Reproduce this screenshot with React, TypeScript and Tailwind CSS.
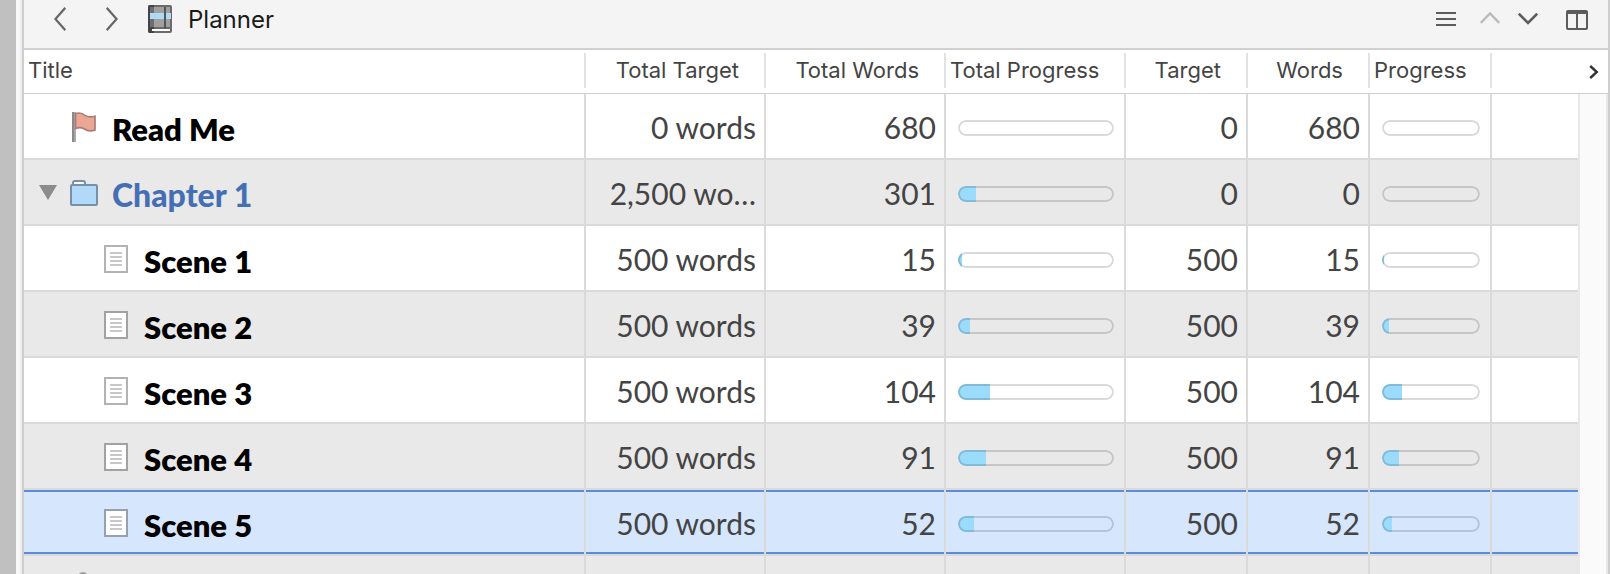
import React, { useState } from 'react';
import clsx from 'clsx';

type IconKind = 'flag' | 'folder' | 'doc' | 'character';

interface PlannerItem {
  id: string;
  title: string;
  icon: IconKind;
  depth: number;
  totalTarget: string;
  totalWords: string;
  totalProgress: number;
  target: string;
  words: string;
  progress: number;
}

const scene = (n: number, words: number): PlannerItem => ({
  id: `scene-${n}`,
  title: `Scene ${n}`,
  icon: 'doc',
  depth: 1,
  totalTarget: '500 words',
  totalWords: String(words),
  totalProgress: words / 500,
  target: '500',
  words: String(words),
  progress: words / 500,
});

const items: PlannerItem[] = [
  {
    id: 'read-me',
    title: 'Read Me',
    icon: 'flag',
    depth: 0,
    totalTarget: '0 words',
    totalWords: '680',
    totalProgress: 0,
    target: '0',
    words: '680',
    progress: 0,
  },
  {
    id: 'chapter-1',
    title: 'Chapter 1',
    icon: 'folder',
    depth: 0,
    totalTarget: '2,500 wo…',
    totalWords: '301',
    totalProgress: 301 / 2500,
    target: '0',
    words: '0',
    progress: 0,
  },
  scene(1, 15),
  scene(2, 39),
  scene(3, 104),
  scene(4, 91),
  scene(5, 52),
];

function BookIcon() {
  return (
    <svg width="24" height="28" viewBox="0 0 24 28" aria-hidden="true">
      <rect x="0" y="0" width="24" height="28" rx="2" fill="#6a6a6a" />
      <path d="M2 0H6V28H2Q0 28 0 26V2Q0 0 2 0Z" fill="#444444" />
      <rect x="2" y="2" width="4" height="20" fill="#6e6e6e" />
      <rect x="6" y="2" width="16" height="20" fill="#a0a0a0" />
      <rect x="2" y="8" width="21" height="6" fill="#aedaf8" />
      <rect x="16" y="2" width="2" height="24" fill="#555555" />
      <rect x="4" y="24" width="18" height="2" fill="#ffffff" />
    </svg>
  );
}

function ItemIcon({ kind }: { kind: IconKind }) {
  if (kind === 'flag') {
    return (
      <svg width="24" height="30" viewBox="0 0 24 30" aria-hidden="true">
        <rect x="0" y="0" width="4" height="30" fill="#a9a9a9" />
        <rect x="0" y="0" width="2" height="30" fill="#8a8a8a" />
        <path
          d="M3.5 1.5C8 .2 10.5 1.2 13 3.4C16 5.4 19 5.2 23 4.2V18C18 19.8 15 18.8 12 16.8C9.5 15.2 7 15 3.5 16.6Z"
          fill="#eaa794"
          stroke="#a97d7a"
          strokeWidth="1.7"
        />
      </svg>
    );
  }
  if (kind === 'folder') {
    return (
      <svg width="28" height="26" viewBox="0 0 28 26" aria-hidden="true">
        <path d="M3 5V3Q3 1 5 1H13Q15 1 15 3V5" fill="#ffffff" stroke="#7690a8" strokeWidth="2" />
        <rect x="1" y="5" width="26" height="20" rx="1" fill="#b2daf8" stroke="#7690a8" strokeWidth="2" />
      </svg>
    );
  }
  if (kind === 'doc') {
    return (
      <svg width="24" height="28" viewBox="0 0 24 28" aria-hidden="true">
        <rect x="2" y="2" width="20" height="24" fill="#ffffff" />
        <rect x="1" y="1" width="22" height="26" fill="none" stroke="#000000" strokeOpacity="0.3" strokeWidth="2" />
        <path d="M6 8H18M6 12H18M6 16H18M6 20H18" stroke="#c8c8c8" strokeWidth="2" />
      </svg>
    );
  }
  return (
    <svg width="24" height="32" viewBox="0 0 24 32" aria-hidden="true">
      <circle cx="13" cy="5" r="4" fill="#c4c4c4" stroke="#a2a2a2" strokeWidth="2" />
      <path d="M5 31V18Q5 11 13 11T21 18V31Z" fill="#c4c4c4" stroke="#a2a2a2" strokeWidth="2" />
    </svg>
  );
}

function ProgressBar({ value, label }: { value: number; label: string }) {
  return (
    <div
      role="progressbar"
      aria-label={label}
      aria-valuenow={Math.round(value * 100)}
      className="relative mt-1 h-4 w-full overflow-hidden rounded-full"
    >
      {/* snap to whole pixels so the edge of the fill stays crisp */}
      <div className="h-full bg-[#9bdcfc]" style={{ width: `round(down, ${value * 100}%, 1px)` }} />
      <div className="absolute inset-0 rounded-full border-2 border-black/15" />
    </div>
  );
}

interface CellProps {
  selected?: boolean;
  last?: boolean;
  className?: string;
  children?: React.ReactNode;
}

function Cell({ selected, last, className, children }: CellProps) {
  return (
    <td className={clsx('border-b-2 border-[#dadada] p-0', !last && 'border-r-2')}>
      <div
        className={clsx(
          'flex h-16 items-center',
          selected && 'border-y-2 border-[#5b8cdb] bg-[#d6e6fd]',
          className
        )}
      >
        {children}
      </div>
    </td>
  );
}

function HeaderCell({ children, align = 'left' }: { children: React.ReactNode; align?: 'left' | 'right' }) {
  return (
    <th scope="col" className="border-b border-[#d0d0d0] p-0 font-normal">
      <div
        className={clsx(
          'mb-[5px] mt-[3px] flex h-[35px] items-center whitespace-nowrap border-r-2 border-[#e2e2e2]',
          align === 'right' ? 'justify-end pr-[25px]' : 'pl-1'
        )}
      >
        {children}
      </div>
    </th>
  );
}

function Toolbar() {
  return (
    <header className="flex h-[50px] items-center border-b-2 border-[#d0d0d0] bg-[#f4f4f4] pb-[10px] pl-[30px] pr-5">
      <button type="button" aria-label="Back">
        <svg width="12" height="24" viewBox="0 0 12 24" fill="none" stroke="#666666" strokeWidth="2.2">
          <path d="M11.3 .8L1.4 12L11.3 23.2" />
        </svg>
      </button>
      <button type="button" aria-label="Forward" className="ml-10">
        <svg width="12" height="24" viewBox="0 0 12 24" fill="none" stroke="#666666" strokeWidth="2.2">
          <path d="M.7 .8L10.6 12L.7 23.2" />
        </svg>
      </button>
      <div className="ml-[30px] flex items-center gap-4">
        <BookIcon />
        <h1 className="pt-0.5 text-2xl text-[#1a1a1a]">Planner</h1>
      </div>
      <div className="ml-auto flex items-center">
        <button type="button" aria-label="Options">
          <svg width="20" height="14" viewBox="0 0 20 14" stroke="#5c5c5c" strokeWidth="2">
            <path d="M0 1H20M0 7H20M0 13H20" />
          </svg>
        </button>
        <button type="button" aria-label="Previous" className="ml-6">
          <svg width="20" height="14" viewBox="0 0 20 14" fill="none" stroke="#bbbbbb" strokeWidth="2.4">
            <path d="M.8 11L10 1.4L19.2 11" />
          </svg>
        </button>
        <button type="button" aria-label="Next" className="ml-[18px]">
          <svg width="20" height="14" viewBox="0 0 20 14" fill="none" stroke="#5c5c5c" strokeWidth="2.6">
            <path d="M.8 1.6L10 11L19.2 1.6" />
          </svg>
        </button>
        <button type="button" aria-label="Split view" className="ml-7 pt-0.5">
          <svg width="22" height="20" viewBox="0 0 22 20" fill="none" stroke="#5c5c5c" strokeWidth="2">
            <rect x="1" y="1" width="20" height="18" rx="1" />
            <path d="M1 3H21M11 3V19" />
          </svg>
        </button>
      </div>
    </header>
  );
}

export default function App() {
  const [selectedId, setSelectedId] = useState('scene-5');
  const [expanded, setExpanded] = useState(true);

  const visible = items.filter((item) => expanded || item.depth === 0);

  return (
    <div className="flex h-screen overflow-hidden bg-white font-['Inter',sans-serif]">
      <div className="w-4 shrink-0 bg-[#c0c0c0]" />
      <div className="w-1 shrink-0 bg-[#f8f8f8]" />
      <div className="w-0.5 shrink-0 bg-[#ececec]" />
      <main className="min-w-0 flex-1 border-x-2 border-[#cecece]">
        <Toolbar />
        <table className="w-full table-fixed border-separate border-spacing-0">
          <colgroup>
            <col />
            <col className="w-[180px]" />
            <col className="w-[180px]" />
            <col className="w-[180px]" />
            <col className="w-[122px]" />
            <col className="w-[122px]" />
            <col className="w-[122px]" />
            <col className="w-[86px]" />
            <col className="w-[30px]" />
          </colgroup>
          <thead className="text-[22px] text-[#444444]">
            <tr>
              <HeaderCell>Title</HeaderCell>
              <HeaderCell align="right">Total Target</HeaderCell>
              <HeaderCell align="right">Total Words</HeaderCell>
              <HeaderCell>Total Progress</HeaderCell>
              <HeaderCell align="right">Target</HeaderCell>
              <HeaderCell align="right">Words</HeaderCell>
              <HeaderCell>Progress</HeaderCell>
              <th colSpan={2} className="border-b border-[#d0d0d0] p-0">
                <div className="flex justify-end pr-[9px]">
                  <button type="button" aria-label="More columns">
                    <svg width="10" height="14" viewBox="0 0 10 14" fill="none" stroke="#333333" strokeWidth="2.4">
                      <path d="M1.2 1L7.8 7L1.2 13" />
                    </svg>
                  </button>
                </div>
              </th>
            </tr>
          </thead>
          <tbody className="font-['Lato',sans-serif] text-[30px] text-[#444444]">
            {visible.map((item, i) => {
              const selected = item.id === selectedId;
              const isFolder = item.icon === 'folder';
              return (
                <tr
                  key={item.id}
                  onClick={() => setSelectedId(item.id)}
                  className={i % 2 ? 'bg-[#e9e9e9]' : 'bg-white'}
                >
                  <Cell selected={selected} className={item.depth ? 'pl-[47px]' : 'pl-[15px]'}>
                    <div className="mr-[13px] w-[18px] shrink-0">
                      {isFolder && (
                        <button
                          type="button"
                          aria-label={`Toggle ${item.title}`}
                          aria-expanded={expanded}
                          onClick={() => setExpanded(!expanded)}
                          className="block"
                        >
                          <svg width="18" height="15" viewBox="0 0 18 15" fill="#8c8c8c">
                            <path d="M0 0H18L9 15Z" />
                          </svg>
                        </button>
                      )}
                    </div>
                    <div className="flex w-7 shrink-0 justify-center pt-0.5">
                      <ItemIcon kind={item.icon} />
                    </div>
                    <span
                      className={clsx(
                        'ml-[14px] whitespace-nowrap pt-[6px]',
                        isFolder
                          ? 'text-[32px] font-black text-[#456fb5]'
                          : 'text-[31px] font-extrabold text-black'
                      )}
                    >
                      {item.title}
                    </span>
                  </Cell>
                  <Cell selected={selected} className="justify-end whitespace-nowrap pr-2 pt-0.5">
                    {item.totalTarget}
                  </Cell>
                  <Cell selected={selected} className="justify-end pr-2 pt-0.5">{item.totalWords}</Cell>
                  <Cell selected={selected} className="pl-3 pr-[10px]">
                    <ProgressBar value={item.totalProgress} label={`${item.title} total progress`} />
                  </Cell>
                  <Cell selected={selected} className="justify-end pr-2 pt-0.5">{item.target}</Cell>
                  <Cell selected={selected} className="justify-end pr-2 pt-0.5">{item.words}</Cell>
                  <Cell selected={selected} className="pl-3 pr-[10px]">
                    <ProgressBar value={item.progress} label={`${item.title} progress`} />
                  </Cell>
                  <Cell selected={selected} last />
                  {i === 0 && (
                    <td rowSpan={visible.length + 1} className="border-l-2 border-r-2 border-[#e8e8e8] bg-[#fafafa] p-0" />
                  )}
                </tr>
              );
            })}
            <tr className="bg-[#e9e9e9]">
              <Cell className="pl-[46px]">
                <ItemIcon kind="character" />
              </Cell>
              <Cell />
              <Cell />
              <Cell />
              <Cell />
              <Cell />
              <Cell />
              <Cell last />
            </tr>
          </tbody>
        </table>
      </main>
    </div>
  );
}
